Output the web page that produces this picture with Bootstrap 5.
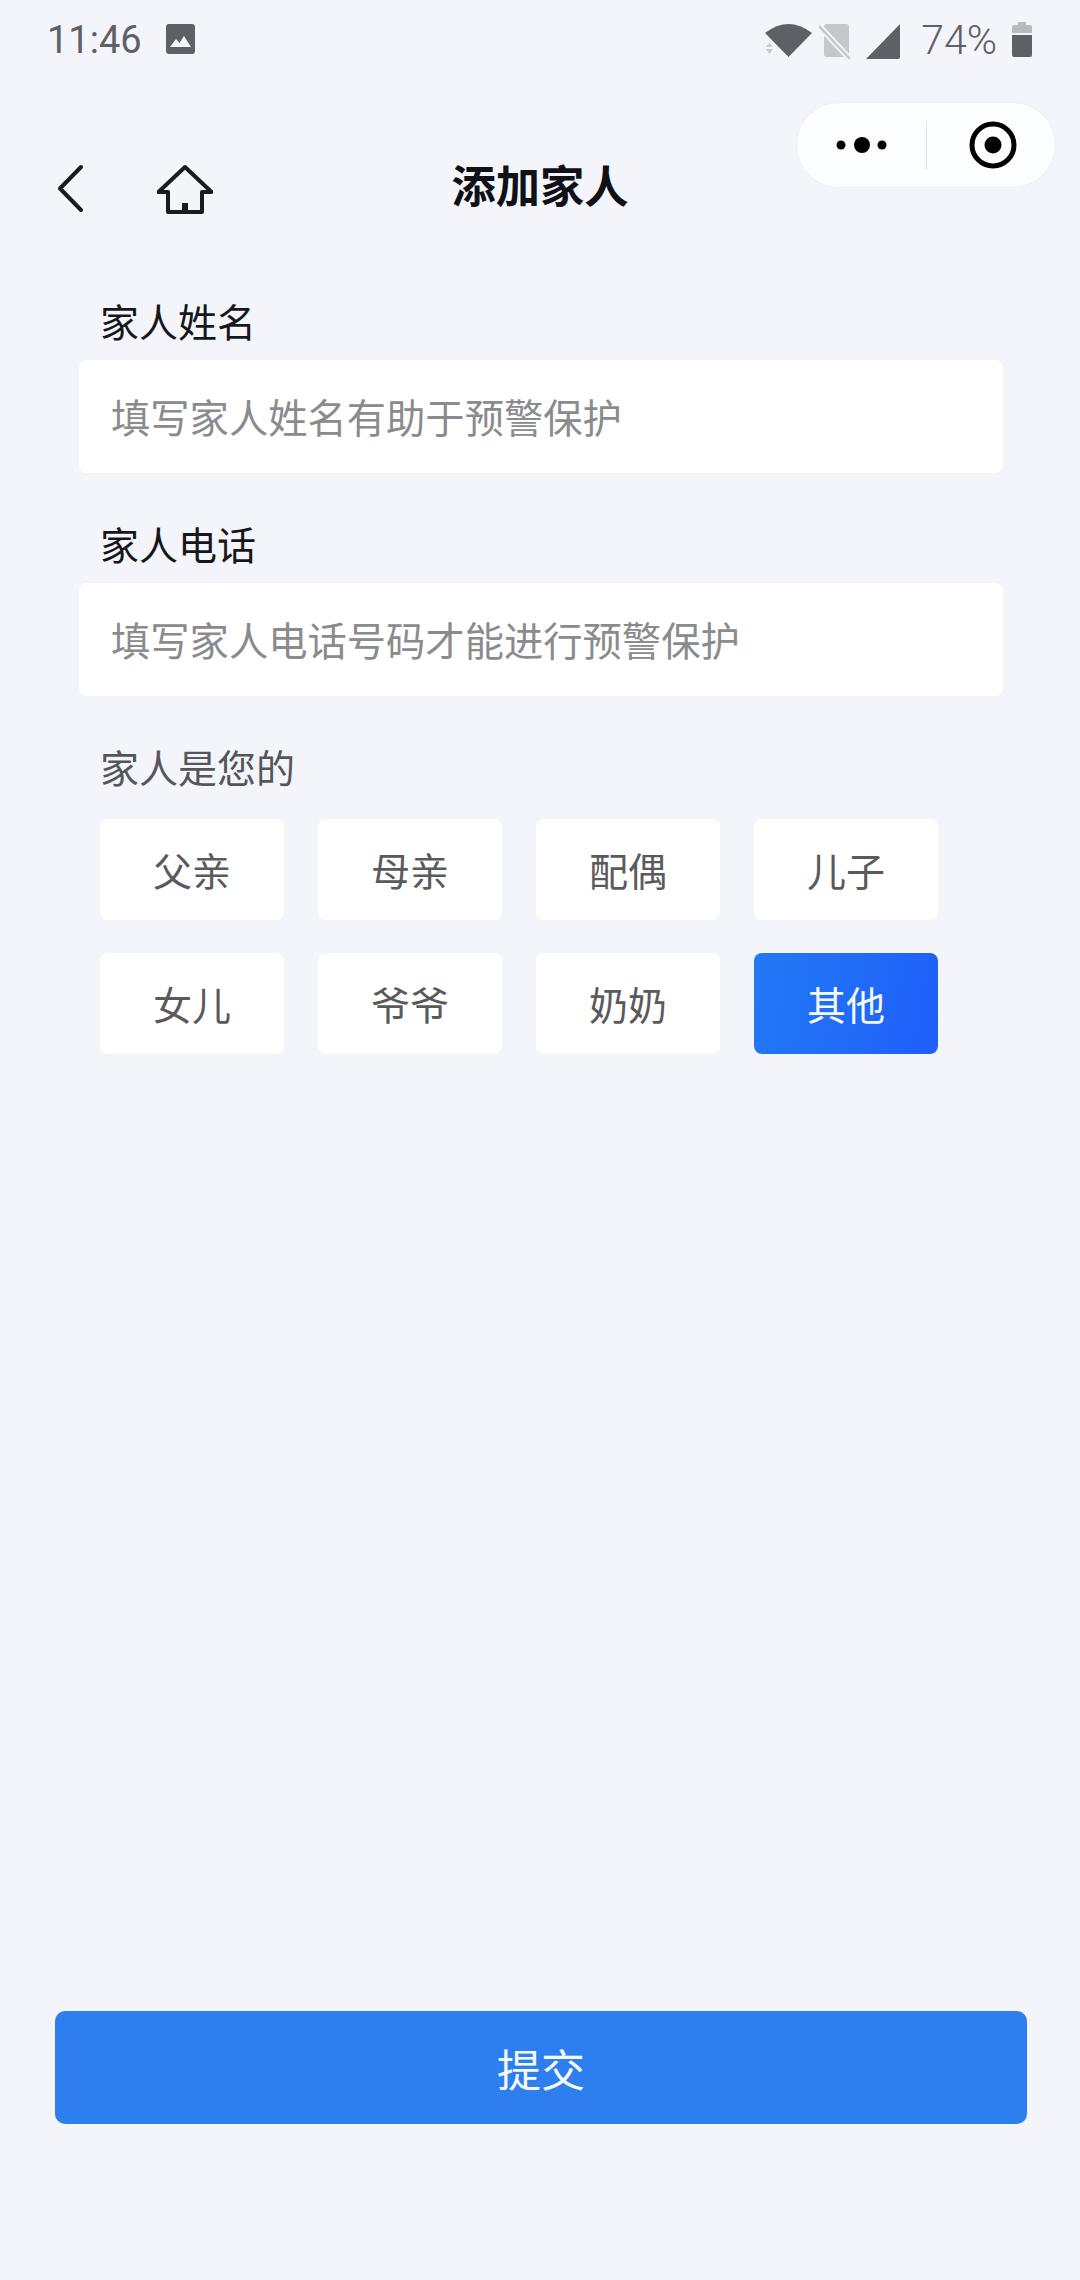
<!DOCTYPE html>
<html lang="zh-CN">
<head>
    <meta charset="UTF-8">
    <meta name="viewport" content="width=device-width, initial-scale=1.0">
    <title>添加家人</title>
    <link href="https://cdn.jsdelivr.net/npm/bootstrap@5.3.0/dist/css/bootstrap.min.css" rel="stylesheet">
    <style>
        body {
            width: 1080px;
            height: 2280px;
            background-color: #f3f5fa;
            font-family: "Noto Sans CJK SC", "Liberation Sans", sans-serif;
            overflow: hidden;
        }
        .status-row {
            height: 80px;
            padding: 20px 48px 0 47px;
            color: #5f6065;
            font-family: Roboto, "Liberation Sans", sans-serif;
            font-size: 38px;
            line-height: 40px;
        }
        .status-row svg { display: block; }
        .status-pct {
            font-size: 41px;
            font-weight: 300;
        }
        .mini-capsule {
            position: absolute;
            left: 796px;
            top: 102px;
            width: 260px;
            height: 86px;
            border-radius: 43px;
            background-color: #fcfdfe;
            border: 1px solid #eff0f5;
        }
        .capsule-line {
            width: 1px;
            height: 48px;
            background-color: #e3e4e8;
        }
        .top-nav {
            display: grid;
            grid-template-columns: 1fr auto 1fr;
            align-items: start;
            height: 52px;
            margin-top: 83px;
            padding-left: 58px;
        }
        .top-nav svg { display: block; }
        .page-title {
            margin: -4px 0 0;
            padding-right: 58px;
            color: #101116;
            font-size: 44.3px;
            font-weight: 700;
            line-height: 50px;
        }
        .form-area {
            padding: 74px 77px 0 79px;
        }
        .field-label {
            margin: 0 0 9px 21px;
            color: #16171b;
            font-size: 39px;
            line-height: 62px;
        }
        .field-label.soft { color: #55565a; }
        .form-control.field-input {
            height: 113px;
            margin-bottom: 39px;
            padding: 0 32px 2px;
            border: 0;
            border-radius: 8px;
            background-color: #fff;
            font-size: 39.3px;
            box-shadow: none;
        }
        .field-input::placeholder {
            color: #8a8b8d;
            opacity: 1;
        }
        .chip-grid {
            display: grid;
            grid-template-columns: repeat(4, 184px);
            grid-auto-rows: 101px;
            column-gap: 34px;
            row-gap: 33px;
            margin: 22px 0 0 21px;
        }
        .btn.chip-btn {
            padding: 0;
            border: 0;
            border-radius: 8px;
            background-color: #fff;
            color: #5a5a5c;
            font-size: 39px;
            line-height: 1;
        }
        .btn.chip-btn.picked {
            background: linear-gradient(100deg, #2279f5, #1f5ffb);
            color: #f4f9ff;
        }
        .submit-wrap {
            padding: 0 53px 156px 55px;
        }
        .btn.submit-btn {
            height: 113px;
            padding: 0;
            border: 0;
            border-radius: 10px;
            background-color: #2d7ff0;
            color: #f6faff;
            font-size: 44px;
        }
    </style>
</head>
<body class="d-flex flex-column position-relative">
    <div class="status-row d-flex justify-content-between">
        <div class="d-flex gap-4">
            <span>11:46</span>
            <svg width="29" height="30" viewBox="0 0 29 30" class="mt-1">
                <rect width="29" height="30" rx="3" fill="#5f6065"/>
                <path d="M4 23 L10 15 L13.500 19 L18 12 L25 23 Z" fill="#f3f5fa"/>
            </svg>
        </div>
        <div class="d-flex align-items-start">
            <svg width="47" height="36" viewBox="0 0 47 36" class="mt-1" style="margin-right:7px">
                <path d="M0 9 Q23.500 -9 47 9 L23.500 33 Z" fill="#5f6065"/>
                <path d="M1 23 L4.500 19 L8 23 Z M1 25 L8 25 L4.500 30 Z" fill="#c9cacd"/>
            </svg>
            <svg width="32" height="36" viewBox="0 0 32 36" class="mt-1" style="margin-right:15px">
                <path d="M5 3 Q5 0 8 0 L27 0 Q30 0 30 3 L30 33 L8 33 Q5 33 5 30 Z" fill="#c6c7cb"/>
                <path d="M0 2 L31 35" stroke="#f3f5fa" stroke-width="6"/>
                <path d="M0 2 L31 35" stroke="#c6c7cb" stroke-width="2.500"/>
            </svg>
            <svg width="34" height="35" viewBox="0 0 34 35" class="mt-1" style="margin-right:21px">
                <path d="M34 0 L34 33 Q34 35 32 35 L0 35 Z" fill="#5f6065"/>
            </svg>
            <span class="status-pct">74%</span>
            <svg width="20" height="36" viewBox="0 0 20 36" style="margin:2px 0 0 15px">
                <path d="M6 0 L14 0 L14 3 L18 3 Q20 3 20 5 L20 11 L0 11 L0 5 Q0 3 2 3 L6 3 Z" fill="#b9babd"/>
                <path d="M0 13 L20 13 L20 33 Q20 35 18 35 L2 35 Q0 35 0 33 Z" fill="#5f6065"/>
            </svg>
        </div>
    </div>

    <div class="mini-capsule d-flex align-items-center">
        <svg width="129" height="20" viewBox="0 0 129 20">
            <circle cx="44" cy="10" r="4.500" fill="#000"/>
            <circle cx="65" cy="10" r="8" fill="#000"/>
            <circle cx="85" cy="10" r="4.500" fill="#000"/>
        </svg>
        <div class="capsule-line"></div>
        <svg width="128" height="50" viewBox="0 0 128 50">
            <circle cx="66" cy="25" r="21" fill="none" stroke="#000" stroke-width="5"/>
            <circle cx="66" cy="25" r="8.500" fill="#000"/>
        </svg>
    </div>

    <nav class="top-nav">
        <div class="d-flex align-items-start">
            <svg width="25" height="50" viewBox="0 0 25 50">
                <path d="M23 4 L2 25.500 L23 47" fill="none" stroke="#1a1b20" stroke-width="4" stroke-linecap="round" stroke-linejoin="round"/>
            </svg>
            <svg width="56" height="52" viewBox="0 0 56 52" style="margin-left:74px">
                <path d="M1.500 29 L28 4 L54.500 29 L45 29 L45 49 L11 49 L11 29 Z" fill="none" stroke="#1a1b20" stroke-width="4" stroke-linejoin="round"/>
                <rect x="25" y="40" width="6" height="9" fill="#1a1b20"/>
            </svg>
        </div>
        <h1 class="page-title">添加家人</h1>
        <div></div>
    </nav>

    <form class="form-area flex-grow-1">
        <label class="field-label d-block" for="nameInput">家人姓名</label>
        <input class="form-control field-input" id="nameInput" type="text" placeholder="填写家人姓名有助于预警保护">
        <label class="field-label d-block" for="phoneInput">家人电话</label>
        <input class="form-control field-input" id="phoneInput" type="text" placeholder="填写家人电话号码才能进行预警保护">
        <div class="field-label soft">家人是您的</div>
        <div class="chip-grid">
            <button type="button" class="btn chip-btn">父亲</button>
            <button type="button" class="btn chip-btn">母亲</button>
            <button type="button" class="btn chip-btn">配偶</button>
            <button type="button" class="btn chip-btn">儿子</button>
            <button type="button" class="btn chip-btn">女儿</button>
            <button type="button" class="btn chip-btn">爷爷</button>
            <button type="button" class="btn chip-btn">奶奶</button>
            <button type="button" class="btn chip-btn picked">其他</button>
        </div>
    </form>

    <div class="submit-wrap d-grid">
        <button type="button" class="btn submit-btn">提交</button>
    </div>
</body>
</html>
